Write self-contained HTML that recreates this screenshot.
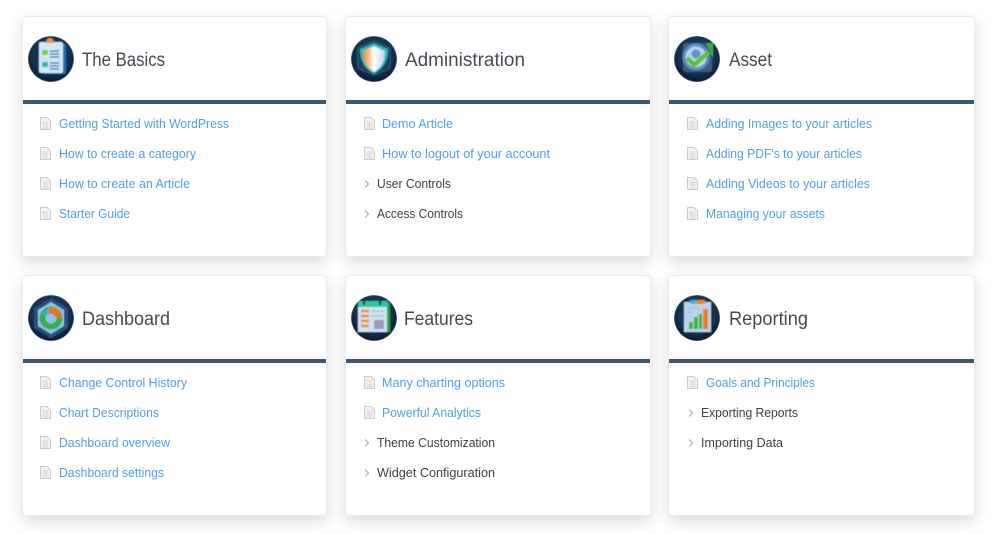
<!DOCTYPE html>
<html lang="en"><head><meta charset="utf-8"><title>Knowledge Base</title>
<style>
html,body{margin:0;padding:0;background:#fff;width:1000px;height:534px;overflow:hidden}
.c{position:absolute;box-sizing:border-box;height:241px;background:#fff;border:1px solid #ebebeb;border-radius:4px;box-shadow:0 5px 15px rgba(0,0,0,.15)}
.b{position:absolute;left:0;right:0;top:83px;height:4px;background:#3f5871}
svg.m{position:absolute;left:0;top:0}
text{font-family:"Liberation Sans",sans-serif}
.t{font-size:19px;fill:#444b55}
.l{font-size:12.5px;fill:#4f9fe8}
.d{font-size:12.5px;fill:#404040}
</style></head><body>
<div class="c" style="left:22px;top:16px;width:305px"><div class="b"></div></div>
<div class="c" style="left:345px;top:16px;width:306px"><div class="b"></div></div>
<div class="c" style="left:668px;top:16px;width:307px"><div class="b"></div></div>
<div class="c" style="left:22px;top:275px;width:305px"><div class="b"></div></div>
<div class="c" style="left:345px;top:275px;width:306px"><div class="b"></div></div>
<div class="c" style="left:668px;top:275px;width:307px"><div class="b"></div></div>
<svg class="m" width="1000" height="534" viewBox="0 0 1000 534" xmlns="http://www.w3.org/2000/svg">
<defs>
<radialGradient id="bg" cx="50%" cy="42%" r="60%"><stop offset="0" stop-color="#2a4a6e"/><stop offset=".7" stop-color="#12304f"/><stop offset="1" stop-color="#06162c"/></radialGradient>
<linearGradient id="sh" x1="0" x2="1"><stop offset="0" stop-color="#f58a1f"/><stop offset=".3" stop-color="#f8c9a0"/><stop offset=".5" stop-color="#fff"/><stop offset="1" stop-color="#bcd3f0"/></linearGradient>
<filter id="s" x="-10%" y="-10%" width="120%" height="120%"><feGaussianBlur stdDeviation=".45"/></filter>
<clipPath id="c1"><circle cx="51" cy="59" r="23"/></clipPath>
<clipPath id="c2"><circle cx="374" cy="59" r="23"/></clipPath>
<clipPath id="c3"><circle cx="697" cy="59" r="23"/></clipPath>
<clipPath id="c4"><circle cx="51" cy="318" r="23"/></clipPath>
<clipPath id="c5"><circle cx="374" cy="318" r="23"/></clipPath>
<clipPath id="c6"><circle cx="697" cy="318" r="23"/></clipPath>
<g id="doc"><path d="M.5.5H7L10.5 4V12.5H.5Z" fill="#f3f3f3" stroke="#cccccc"/><path d="M2.500 5H8.500M2.500 7H8.500M2.500 9H8.500M2.500 11H8.500" stroke="#cccccc" stroke-width=".8"/></g>
<path id="chev" d="M0 0L3.500 3.500L0 7" fill="none" stroke="#c99aae" stroke-width="1.100"/>
</defs>

<!-- Icon: The Basics -->
<g clip-path="url(#c1)"><g filter="url(#s)">
<circle cx="51" cy="59" r="23" fill="url(#bg)"/>
<rect x="43" y="44" width="23" height="30" rx="2" fill="#1f6fb4"/>
<rect x="39" y="42" width="24" height="31" rx="2" fill="#cfe6f7"/>
<path d="M46 43Q46 38 50 38Q54 38 54 43Z" fill="#ee8f3a"/>
<rect x="42" y="50" width="6" height="5" fill="#7dd321"/><rect x="42" y="62" width="6" height="5" fill="#2cb9ac"/>
<path d="M50 51H59M50 54H59M50 57H59M50 63H59M50 66H59M50 69H59" stroke="#2a66a5" stroke-width="1.300"/>
</g></g>

<!-- Icon: Administration -->
<g clip-path="url(#c2)"><g filter="url(#s)">
<circle cx="374" cy="59" r="23" fill="url(#bg)"/>
<path d="M374 41L390 48V68L374 75L358 68V48Z" fill="#1b3f58" stroke="#2b6273"/>
<path d="M374 43L388 49C388 61 384 68 374 74C364 68 360 61 360 49Z" fill="#2fb5bd"/>
<path d="M374 46L385 51C385 61 382 67 374 72C366 67 363 61 363 51Z" fill="url(#sh)"/>
</g></g>

<!-- Icon: Asset -->
<g clip-path="url(#c3)"><g filter="url(#s)">
<circle cx="697" cy="59" r="23" fill="url(#bg)"/>
<rect x="683" y="43" width="29" height="29" rx="3" fill="#3e5d78"/>
<path d="M706 43H713V58Z" fill="#3fae3a"/>
<circle cx="696" cy="57" r="12" fill="#b8d3ef" stroke="#5c8fc8" stroke-width="3"/>
<circle cx="696" cy="54" r="4.500" fill="#6a93c4"/>
<path d="M687 58L694 65L709 52" fill="none" stroke="#55c62a" stroke-width="4.500"/>
</g></g>

<!-- Icon: Dashboard -->
<g clip-path="url(#c4)"><g filter="url(#s)">
<circle cx="51" cy="318" r="23" fill="url(#bg)"/>
<path d="M51 298L68 308V328L51 338L34 328V308Z" fill="#2b5078"/>
<path d="M51 302L64 310V326L51 334L38 326V310Z" fill="#8fc3ec"/>
<circle cx="51" cy="318" r="8.500" fill="none" stroke="#37b04a" stroke-width="6"/>
<path d="M47 309A10 10 0 0 1 62 317L56 318A5 5 0 0 0 50 314Z" fill="#f0701f"/>
<path d="M42 315A9 9 0 0 1 48 309L50 314Z" fill="#26b6d8"/>
</g></g>

<!-- Icon: Features -->
<g clip-path="url(#c5)"><g filter="url(#s)">
<circle cx="374" cy="318" r="23" fill="url(#bg)"/>
<rect x="358" y="303" width="32" height="29" fill="#27a832"/>
<rect x="358" y="301" width="30" height="7" fill="#2cc4a8"/>
<rect x="358" y="307" width="29" height="25" fill="#cfe1f3"/>
<path d="M364 299V305M380 299V305" stroke="#1d2f44" stroke-width="2"/>
<path d="M361 311H369M361 316H369M361 321H369M361 326H369" stroke="#f09020" stroke-width="2.600"/>
<path d="M371 311H384M371 316H384" stroke="#9db8d2"/>
<rect x="374" y="320" width="10" height="9" fill="#7ea6d0"/><path d="M376 328L379 321L382 328" stroke="#e8702a" fill="none"/>
</g></g>

<!-- Icon: Reporting -->
<g clip-path="url(#c6)"><g filter="url(#s)">
<circle cx="697" cy="318" r="23" fill="url(#bg)"/>
<rect x="684" y="302" width="27" height="30" fill="#b9d2ea"/>
<rect x="690" y="300" width="7" height="4" fill="#35b3e0"/><rect x="696" y="300" width="9" height="4" fill="#f0812a"/>
<rect x="689" y="322" width="4" height="7" fill="#39b838"/><rect x="694" y="317" width="4" height="12" fill="#39b838"/><rect x="699" y="314" width="3" height="15" fill="#39b838"/><rect x="703" y="309" width="5" height="20" fill="#ef7a22"/>
<path d="M688 308H700M688 312H694" stroke="#8ca5bd" stroke-dasharray="1.500 1.500"/>
</g></g>

<!-- Titles -->
<text class="t" x="82" y="66" textLength="83" lengthAdjust="spacingAndGlyphs">The Basics</text>
<text class="t" x="405" y="66" textLength="120" lengthAdjust="spacingAndGlyphs">Administration</text>
<text class="t" x="729" y="66" textLength="43" lengthAdjust="spacingAndGlyphs">Asset</text>
<text class="t" x="82" y="325" textLength="88" lengthAdjust="spacingAndGlyphs">Dashboard</text>
<text class="t" x="404" y="325" textLength="69" lengthAdjust="spacingAndGlyphs">Features</text>
<text class="t" x="729" y="325" textLength="79" lengthAdjust="spacingAndGlyphs">Reporting</text>

<!-- Doc icons -->
<use href="#doc" x="40" y="117"/><use href="#doc" x="40" y="147"/><use href="#doc" x="40" y="177"/><use href="#doc" x="40" y="207"/>
<use href="#doc" x="364" y="117"/><use href="#doc" x="364" y="147"/>
<use href="#doc" x="687" y="117"/><use href="#doc" x="687" y="147"/><use href="#doc" x="687" y="177"/><use href="#doc" x="687" y="207"/>
<use href="#doc" x="40" y="376"/><use href="#doc" x="40" y="406"/><use href="#doc" x="40" y="436"/><use href="#doc" x="40" y="466"/>
<use href="#doc" x="364" y="376"/><use href="#doc" x="364" y="406"/>
<use href="#doc" x="687" y="376"/>

<!-- Chevrons -->
<use href="#chev" x="365" y="180.500"/><use href="#chev" x="365" y="210.500"/>
<use href="#chev" x="365" y="439.500"/><use href="#chev" x="365" y="469.500"/>
<use href="#chev" x="689" y="409.500"/><use href="#chev" x="689" y="439.500"/>

<!-- Links -->
<text class="l" x="59" y="128" textLength="170" lengthAdjust="spacingAndGlyphs">Getting Started with WordPress</text>
<text class="l" x="59" y="158" textLength="137" lengthAdjust="spacingAndGlyphs">How to create a category</text>
<text class="l" x="59" y="188" textLength="131" lengthAdjust="spacingAndGlyphs">How to create an Article</text>
<text class="l" x="59" y="218" textLength="71" lengthAdjust="spacingAndGlyphs">Starter Guide</text>
<text class="l" x="382" y="128" textLength="71" lengthAdjust="spacingAndGlyphs">Demo Article</text>
<text class="l" x="382" y="158" textLength="168" lengthAdjust="spacingAndGlyphs">How to logout of your account</text>
<text class="d" x="377" y="188" textLength="74" lengthAdjust="spacingAndGlyphs">User Controls</text>
<text class="d" x="377" y="218" textLength="86" lengthAdjust="spacingAndGlyphs">Access Controls</text>
<text class="l" x="706" y="128" textLength="166" lengthAdjust="spacingAndGlyphs">Adding Images to your articles</text>
<text class="l" x="706" y="158" textLength="156" lengthAdjust="spacingAndGlyphs">Adding PDF's to your articles</text>
<text class="l" x="706" y="188" textLength="164" lengthAdjust="spacingAndGlyphs">Adding Videos to your articles</text>
<text class="l" x="706" y="218" textLength="119" lengthAdjust="spacingAndGlyphs">Managing your assets</text>
<text class="l" x="59" y="387" textLength="128" lengthAdjust="spacingAndGlyphs">Change Control History</text>
<text class="l" x="59" y="417" textLength="100" lengthAdjust="spacingAndGlyphs">Chart Descriptions</text>
<text class="l" x="59" y="447" textLength="111" lengthAdjust="spacingAndGlyphs">Dashboard overview</text>
<text class="l" x="59" y="477" textLength="105" lengthAdjust="spacingAndGlyphs">Dashboard settings</text>
<text class="l" x="382" y="387" textLength="123" lengthAdjust="spacingAndGlyphs">Many charting options</text>
<text class="l" x="382" y="417" textLength="99" lengthAdjust="spacingAndGlyphs">Powerful Analytics</text>
<text class="d" x="377" y="447" textLength="118" lengthAdjust="spacingAndGlyphs">Theme Customization</text>
<text class="d" x="377" y="477" textLength="118" lengthAdjust="spacingAndGlyphs">Widget Configuration</text>
<text class="l" x="706" y="387" textLength="109" lengthAdjust="spacingAndGlyphs">Goals and Principles</text>
<text class="d" x="701" y="417" textLength="97" lengthAdjust="spacingAndGlyphs">Exporting Reports</text>
<text class="d" x="701" y="447" textLength="82" lengthAdjust="spacingAndGlyphs">Importing Data</text>
</svg>
</body></html>
